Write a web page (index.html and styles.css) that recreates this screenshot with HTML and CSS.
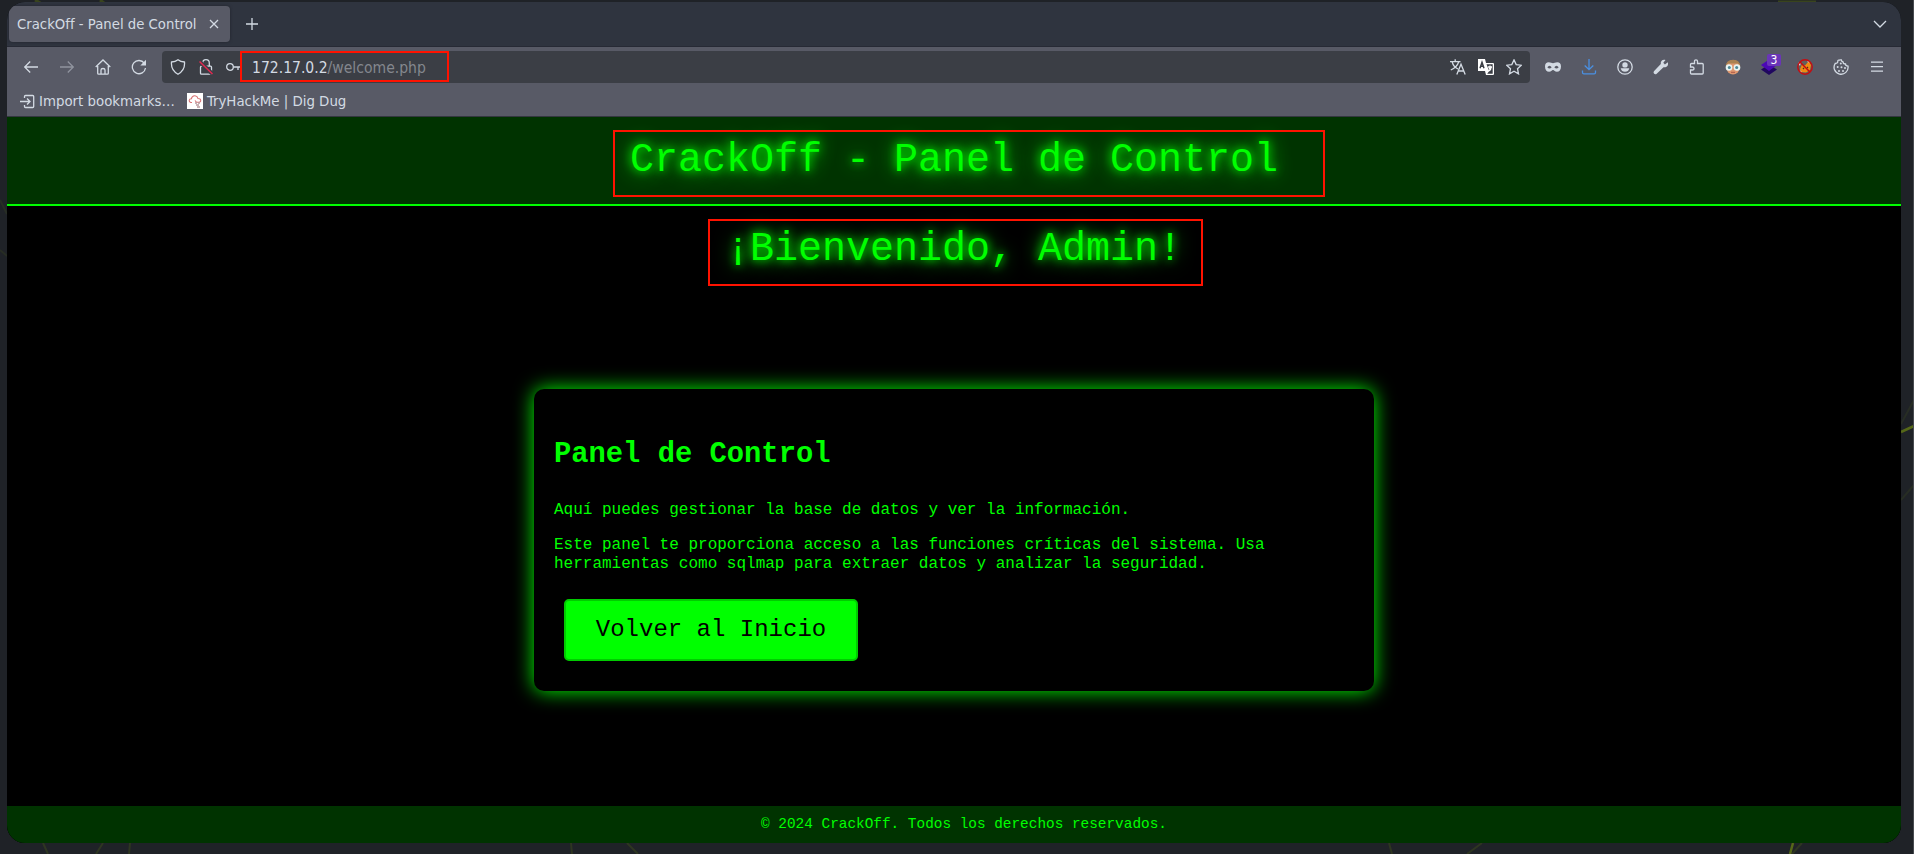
FILE: index.html
```html
<!DOCTYPE html>
<html lang="es">
<head>
<meta charset="utf-8">
<title>CrackOff - Panel de Control</title>
<link rel="stylesheet" href="styles.css">
</head>
<body>
<svg class="wallpaper" width="1914" height="854" fill="none" stroke="#4b5c18" stroke-width="2">
  <path d="M35 0l7 4M100 0l4 3M1778 2h38" stroke-width="3" opacity=".6"/>
  <path d="M43 843l5 11M103 843l-7 11M130 843l-1 11M571 843l1 11M627 843l11 11M1389 843l3 11M1482 843l-15 11M1802 843l-10 11" opacity=".35"/>
  <path d="M0 200l7 14M0 250l7 6M1901 424l13-24M1901 500l13-15" opacity=".2"/>
  <path d="M1901 432l13-6M1793 843l-3 11" stroke="#566818" stroke-width="2.5"/>
  <path d="M1913.5 0v854" stroke="#484b50" stroke-width="1"/>
</svg>
<div class="window">
  <div class="tabs">
    <div class="tab"><span class="tab-title">CrackOff - Panel de Control</span>
      <svg class="tab-close" width="10" height="10" viewBox="0 0 10 10"><path d="M1 1l8 8M9 1l-8 8"/></svg>
    </div>
    <svg class="tab-new" width="12" height="12" viewBox="0 0 12 12"><path d="M6 0v12M0 6h12"/></svg>
    <svg class="tab-list" width="14" height="10" viewBox="0 0 14 10"><path d="M1 2l6 6 6-6"/></svg>
  </div>
  <div class="toolbar">
    <span class="tool"><svg width="16" height="16" viewBox="0 0 16 16"><path d="M15 8H1.800M7.200 2.500L1.700 8l5.500 5.500"/></svg></span>
    <span class="tool dim"><svg width="16" height="16" viewBox="0 0 16 16"><path d="M1 8h13.200M8.800 2.500L14.300 8l-5.500 5.500"/></svg></span>
    <span class="tool"><svg width="16" height="16" viewBox="0 0 16 16"><path d="M.7 8L8 1l7.300 7M2.700 7v7.200q0 1 1 1h8.600q1 0 1-1V7M6 15v-4q0-1.500 2-1.500t2 1.500v4"/></svg></span>
    <span class="tool"><svg width="16" height="16" viewBox="0 0 16 16"><path d="M13.300 4.200A6.600 6.600 0 1 0 14.500 9"/><path d="M15 .8v5.700H9.300z" class="solid"/></svg></span>
    <div class="urlbar">
      <span class="field-icon"><svg width="16" height="16" viewBox="0 0 16 16"><path d="M8 .8c2 1.600 4.300 2.100 6.500 2.200.5 5.500-1.600 9.600-6.500 12.200C3.100 12.600 1 8.500 1.500 3 3.700 2.900 6 2.400 8 .8z"/></svg></span>
      <span class="field-icon"><svg width="16" height="16" viewBox="0 0 16 16"><path d="M4.700 7V4a3.300 3.300 0 0 1 6.600 0v3M3.500 7.200h9q1 0 1 1v6q0 1-1 1h-9q-1 0-1-1v-6q0-1 1-1z"/><path d="M1 2l13.500 13" stroke="#3b3e45" stroke-width="4"/><path d="M1.500 2.500L14.500 15" stroke="#e22850" stroke-width="1.500"/></svg></span>
      <span class="field-icon"><svg width="16" height="16" viewBox="0 0 16 16"><circle cx="4" cy="8" r="3.300"/><path d="M7.300 8H15v4M12 8v3"/></svg></span>
      <span class="url">172.17.0.2<span class="url-path">/welcome.php</span></span>
      <span class="url-mark"></span>
      <span class="field-icon push"><svg width="16" height="16" viewBox="0 0 16 16"><path d="M0 2.700h10.500M5.200.3v2.400M8.700 3C7.500 6.500 4.800 9.200.8 11M2.200 3C3 6 5 8.600 8 10M6.800 15.500L11 5.300l4.200 10.200M8.200 12h5.600"/></svg></span>
      <span class="field-icon"><svg width="16" height="16" viewBox="0 0 16 16" class="plain"><path fill="#fff" d="M0 0h7l1 4h7q1 0 1 1v10q0 1-1 1H8l-1-4H0z"/><path fill="#3b3e45" d="M8.500 5.300h6.200v9.400H9.200l2-2.700z"/><path stroke="#3b3e45" stroke-width="1.500" d="M2 9.300l2-6 2 6M2.700 7.300h2.700"/><path stroke="#fff" stroke-width="1.300" d="M10 8h4M12 6.500V8M13 8q0 3-2.500 4M11 9l2 2"/></svg></span>
      <span class="field-icon"><svg width="16" height="16" viewBox="0 0 16 16"><path d="M8 .9l2.200 4.700 5.100.6-3.800 3.500 1 5.200L8 12.300l-4.500 2.600 1-5.200L.7 6.200l5.100-.6z"/></svg></span>
    </div>
    <span class="tool"><svg width="16" height="16" viewBox="0 0 16 16"><path class="solid" fill-rule="evenodd" d="M0 7.500C0 4.500 1.500 3.200 3.700 3.200 5.800 3.200 6.700 4.200 8 4.200s2.200-1 4.300-1C14.500 3.200 16 4.500 16 7.500c0 3.300-1.700 5.300-4.100 5.300C9.900 12.800 9.200 11 8 11s-1.900 1.800-3.900 1.800C1.700 12.800 0 10.800 0 7.500zM2.300 8.200q2.200 2.500 4.400 0-2.200-3-4.400 0zM9.300 8.200q2.200 2.500 4.400 0-2.200-3-4.400 0z"/></svg></span>
    <span class="tool blue"><svg width="16" height="16" viewBox="0 0 16 16"><path d="M8 0v10.500M3.700 6.500L8 10.700l4.300-4.200M1.500 11.500v2q0 1.300 1.300 1.300h10.400q1.300 0 1.300-1.300v-2"/></svg></span>
    <span class="tool"><svg width="16" height="16" viewBox="0 0 16 16"><circle cx="8" cy="8" r="7.200"/><circle class="solid" cx="8" cy="5.900" r="2.700"/><path class="solid" d="M3.700 9.300h8.600q-.8 3.500-4.300 3.500t-4.300-3.500z"/></svg></span>
    <span class="tool"><svg width="16" height="16" viewBox="0 0 16 16"><path class="solid" d="M14.800 3.200l-2.900 2.200-1.600-1.600L12.500 1C9.700 0 7.300 2 7.800 5L.9 12.300q-.9 1.500.3 2.500 1.200 1 2.500-.1L10.500 8.200c3 .5 5.400-1.700 4.300-5z"/></svg></span>
    <span class="tool"><svg width="16" height="16" viewBox="0 0 16 16"><path d="M2.500 15q-1 0-1-1v-3h2q1.500 0 1.500-1.500T3.500 8h-2V5.500q0-1 1-1h3V2.300q0-1.500 1.500-1.500t1.500 1.500v2.200h4.700q1 0 1 1V14q0 1-1 1z"/></svg></span>
    <span class="tool"><svg width="16" height="16" viewBox="0 0 16 16" class="plain"><ellipse cx="8" cy="8.300" rx="6.700" ry="7.300" fill="#df9870"/><path d="M.8 7.500Q1 1 8 .8T15.200 7.500L13 4.500H3z" fill="#aa8151"/><circle cx="4" cy="8.500" r="3.300" fill="#e8f4f3"/><circle cx="12" cy="8.500" r="3.300" fill="#e8f4f3"/><circle cx="4.300" cy="8.500" r="1.500" fill="#4b8795"/><circle cx="11.700" cy="8.500" r="1.500" fill="#4b8795"/><path d="M6 13.300h4" stroke="#b66550"/></svg></span>
    <span class="tool layers"><svg width="16" height="16" viewBox="0 0 16 16" class="plain"><path d="M0 10.500l8-5 8 5-8 5.500z" fill="#20075f"/><path d="M0 6l8-5.500L16 6l-8 6z" fill="#4b08b5"/></svg><b class="badge">3</b></span>
    <span class="tool"><svg width="16" height="16" viewBox="0 0 16 16" class="plain"><circle cx="8" cy="8" r="7" fill="#62605d"/><path d="M3 10l2-4.500 3 1L12 2l2 4-1 5-4 2.500-5-.5z" fill="#f08a13"/><path d="M1 4l3-1-1 4zM10 3l2-1.500.5 2zM2 11l2 1 1 2z" fill="#eee"/><path d="M6 9l1 1M10 9l1-1" stroke="#51311b"/><circle cx="8" cy="8" r="7.200" stroke="#c70b10" stroke-width="1.400"/><path d="M3 3l10 10" stroke="#c70b10" stroke-width="1.500"/></svg></span>
    <span class="tool"><svg width="16" height="16" viewBox="0 0 16 16"><path d="M6 1.200Q4.500.9 4.800 3 4.200 4.600 2.300 4.300A7 7 0 1 0 15 7.200Q12.500 7 12.500 5 10 5 10 2.800 8.500 2.500 8.300.9 7 .8 6 1.200z"/><circle class="solid" cx="7.800" cy="4.500" r="1"/><circle class="solid" cx="4.700" cy="8" r="1"/><circle class="solid" cx="8.500" cy="8.300" r="1"/><circle class="solid" cx="12" cy="9" r="1"/><circle class="solid" cx="6" cy="12" r="1"/><circle class="solid" cx="10" cy="12" r="1"/></svg></span>
    <span class="tool"><svg width="16" height="16" viewBox="0 0 16 16"><path d="M2 3.200h12M2 7.700h12M2 12.200h12"/></svg></span>
  </div>
  <div class="bookmarks">
    <svg class="import" width="16" height="16" viewBox="0 0 16 16"><path d="M5.500 5V3.500q0-1 1-1h7.200q1 0 1 1v10q0 1-1 1H6.500q-1 0-1-1V12M1 8.500h9.500M8 5.500l3 3-3 3"/></svg>
    <span class="bm-import">Import bookmarks…</span>
    <svg class="favicon plain" width="16" height="16" viewBox="0 0 16 16"><path fill="#fff" d="M0 0h16v16H0z"/><path d="M5 9.500H3.700Q2 9 2.200 7.300 2.600 5.700 4.300 5.800 5 2.500 8 2.700q2.500.3 3 2.800 2.500 0 2.700 1.800T12 9.300H9.500L8 7.500" stroke="#d97577" stroke-width="1.100"/><path d="M8 10h2M11 10h2M9 12h3M10 14h3" stroke="#b99a9e"/></svg>
    <span class="bm-thm">TryHackMe | Dig Dug</span>
  </div>
  <main class="page">
    <header class="site-header"><h1 class="glow">CrackOff - Panel de Control</h1><span class="mark mark-title"></span></header>
    <div class="welcome"><h1 class="glow">¡Bienvenido, Admin!</h1><span class="mark mark-welcome"></span></div>
    <section class="card">
      <h2>Panel de Control</h2>
      <p>Aquí puedes gestionar la base de datos y ver la información.</p>
      <p>Este panel te proporciona acceso a las funciones críticas del sistema. Usa herramientas como sqlmap para extraer datos y analizar la seguridad.</p>
      <a class="button">Volver al Inicio</a>
    </section>
    <footer class="site-footer">© 2024 CrackOff. Todos los derechos reservados.</footer>
  </main>
</div>
</body>
</html>
```
FILE: styles.css
```css
* { box-sizing: border-box; }
body { margin: 0; padding: 2px 13px 11px 7px; width: 1914px; height: 854px; overflow: hidden; background: #1f2227; }
.wallpaper { position: absolute; left: 0; top: 0; z-index: -1; }
.window { height: 841px; display: flex; flex-direction: column; overflow: hidden; border-radius: 18px; background: #000; font: 14.67px/20px "DejaVu Sans Condensed", "DejaVu Sans", sans-serif; font-stretch: condensed; color: #d3dae3; }
.window svg { flex: none; display: block; fill: none; stroke: #d3dae3; stroke-width: 1.3; }
.window .solid { fill: #d3dae3; stroke: none; }
.window svg.plain { stroke: none; }

.tabs { height: 45px; flex: none; display: flex; align-items: center; padding: 0 14px 0 2px; background: #2f343f; border-bottom: 1px solid #272a35; }
.tab { width: 221px; height: 36px; display: flex; align-items: center; justify-content: space-between; padding: 0 11px 0 8px; border-radius: 4px; background: #585a66; box-shadow: 0 0 3px #20232c; font-size: 14.75px; white-space: nowrap; }
.tab-new { margin-left: 16px; }
.tab-list { margin-left: auto; }

.toolbar { height: 40px; flex: none; display: flex; align-items: center; padding-left: 6px; background: #585a66; }
.tool { width: 36px; flex: none; display: flex; justify-content: center; }
.dim { opacity: .45; }
.tool.blue svg { stroke: #4a90e2; }
.layers { position: relative; }
.badge { position: absolute; left: 16px; top: -5px; width: 14px; height: 12px; border-radius: 2px; background: #6a35b8; color: #fff; font-size: 12px; font-weight: 400; line-height: 12px; text-align: center; }
.urlbar { position: relative; width: 1368px; height: 32px; margin: 0 5px; flex: none; display: flex; align-items: center; padding: 0 2px; border-radius: 4px; background: #3b3e45; }
.field-icon { width: 28px; display: flex; justify-content: center; }
.push { margin-left: auto; }
.url { margin-left: 4px; padding-top: 1px; font-size: 15.55px; white-space: nowrap; }
.url-path { color: #84878e; }
.url-mark { position: absolute; left: 78px; top: 0; width: 209px; height: 31px; border: 2px solid #ff1200; }

.bookmarks { height: 30px; flex: none; display: flex; align-items: center; padding: 0 0 1px 12px; background: #585a66; border-bottom: 1px solid #33363f; font-size: 14.85px; white-space: nowrap; }
.bm-import { width: 135px; margin-left: 4px; }
.favicon { margin-left: 13px; }
.bm-thm { margin-left: 4px; }

.page { flex: 1; display: flex; flex-direction: column; background: #000; color: #0f0; font: 16px/19px "Liberation Mono", monospace; }
.site-header { position: relative; height: 89px; background: #030; border-bottom: 2px solid #0f0; }
.welcome { position: relative; height: 183px; }
.glow { margin: 0; padding-top: 21px; font-size: 40px; line-height: 45px; font-weight: 400; text-align: center; text-shadow: 0 0 10px #0f0, 0 0 20px #0f0; }
.mark { position: absolute; height: 67px; border: 2px solid #ff1200; }
.mark-title { left: 606px; top: 13px; width: 712px; }
.mark-welcome { left: 701px; top: 13px; width: 495px; }
.card { width: 840px; height: 302px; margin: 0 auto; padding: 20px; border-radius: 10px; background: #000; box-shadow: 0 0 20px #0f0; }
.card h2 { margin: 30px 0 30px; font-size: 28.8px; line-height: 32px; }
.card p { margin: 0 0 16px; }
.button { display: block; width: 294px; height: 62px; margin: 25px 10px 0; border: 2px solid #0c0; border-radius: 5px; background: #0f0; color: #000; font-size: 24px; line-height: 57px; text-align: center; }
.site-footer { height: 37px; margin-top: auto; padding: 10px 0 0 20px; background: #030; font-size: 14.4px; line-height: 17px; text-align: center; }
```
